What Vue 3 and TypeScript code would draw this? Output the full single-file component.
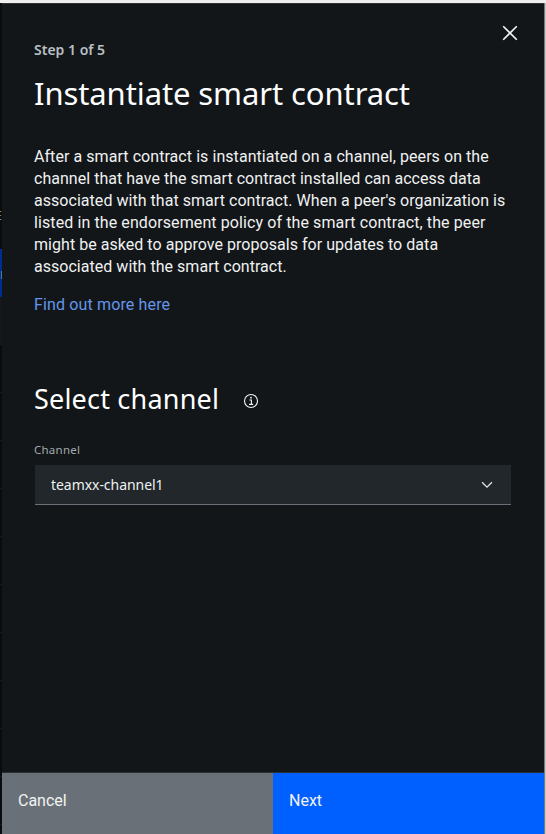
<script setup lang="ts">
import { ref } from 'vue'

interface Line {
  text: string
  spacing: string
}

const channel = ref<string>('teamxx-channel1')

const description: Line[] = [
  { text: 'After a smart contract is instantiated on a channel, peers on the', spacing: '0.06px' },
  { text: 'channel that have the smart contract installed can access data', spacing: '0.03px' },
  { text: "associated with that smart contract. When a peer's organization is", spacing: '0.04px' },
  { text: 'listed in the endorsement policy of the smart contract, the peer', spacing: '0.1px' },
  { text: 'might be asked to approve proposals for updates to data', spacing: '0.04px' },
  { text: 'associated with the smart contract.', spacing: '0.03px' },
]
</script>

<template>
  <div class="screen">
    <div class="topbar"></div>
    <div class="middle">
      <aside class="backdrop">
        <div class="row head">E</div>
        <div class="row active">r</div>
        <div class="row tint"></div>
        <div v-for="n in 11" :key="n" class="row line"></div>
      </aside>
      <section class="panel">
        <button class="close" type="button" aria-label="Close">
          <svg width="16" height="16" viewBox="0 0 16 16">
            <path d="M1.2 1.2 14.8 14.8M14.8 1.2 1.2 14.8" fill="none" stroke="#f3f3f3" stroke-width="1.6" />
          </svg>
        </button>
        <div class="content">
          <p class="step">Step 1 of 5</p>
          <h1 class="title">Instantiate smart contract</h1>
          <p class="description">
            <span v-for="line in description" :key="line.text" :style="{ letterSpacing: line.spacing }">{{ line.text }}</span>
          </p>
          <a class="link">Find out more here</a>
          <div class="subhead">
            <h2>Select channel</h2>
            <svg width="16" height="16" viewBox="0 0 16 16">
              <circle cx="8" cy="8" r="6.5" fill="none" stroke="#f3f3f3" stroke-width="1.1" />
              <path d="M6.4 7H8.4V11.2M6 11.4H10.1" fill="none" stroke="#f3f3f3" stroke-width="1.1" />
              <circle cx="8" cy="4.7" r="0.9" fill="#f3f3f3" />
            </svg>
          </div>
          <label class="label">Channel</label>
          <div class="select">
            <span>{{ channel }}</span>
            <svg width="12" height="8" viewBox="0 0 12 8">
              <path d="M1.1 1.3 6 6.2 10.9 1.3" fill="none" stroke="#e4e6e7" stroke-width="1.3" />
            </svg>
          </div>
        </div>
        <footer class="actions">
          <button class="cancel" type="button">Cancel</button>
          <button class="next" type="button">Next</button>
        </footer>
      </section>
      <div class="edge"></div>
    </div>
  </div>
</template>

<style>
body {
  background: #121619;
}
</style>

<style scoped>
* {
  box-sizing: border-box;
  margin: 0;
}
.screen {
  display: flex;
  flex-direction: column;
  width: 546px;
  height: 834px;
  overflow: hidden;
  font-family: Roboto, 'Liberation Sans', sans-serif;
  font-size: 16px;
}
.topbar {
  height: 3px;
  background: #f0efee;
}
.middle {
  display: flex;
  flex: 1;
  min-height: 0;
}
.backdrop {
  width: 2px;
  overflow: hidden;
  padding-top: 198px;
  background: #090b0c;
}
.row {
  display: flex;
  align-items: center;
  height: 48px;
  font: 14px 'Noto Sans', sans-serif;
  color: #8a8d90;
}
.head {
  justify-content: flex-end;
  padding-bottom: 20px;
  font-size: 12px;
}
.active {
  background: #002d91;
}
.tint {
  background: #15181a;
}
.line {
  border-bottom: 1px solid #15181a;
}
.panel {
  position: relative;
  display: flex;
  flex-direction: column;
  width: 542px;
  background: #121619;
  border-top: 1px solid #303436;
}
.close {
  position: absolute;
  top: 21px;
  right: 26px;
  display: flex;
  padding: 0;
  border: 0;
  background: none;
}
.content {
  flex: 1;
  padding: 37px 33px 0 32px;
}
.step {
  font: 600 14px/18px 'Noto Sans', sans-serif;
  color: #b9bfc3;
}
.title {
  margin-top: 14px;
  font: 400 31px/40px 'Noto Sans', sans-serif;
  letter-spacing: -0.1px;
  white-space: nowrap;
  color: #fff;
}
.description {
  display: flex;
  flex-direction: column;
  margin-top: 33px;
  line-height: 22px;
  white-space: nowrap;
  color: #f0f1f1;
}
.link {
  display: block;
  margin-top: 16px;
  line-height: 22px;
  letter-spacing: 0.14px;
  color: #6496ea;
}
.subhead {
  display: flex;
  align-items: center;
  gap: 24px;
  margin-top: 65px;
}
.subhead h2 {
  width: 185px;
  font: 400 27px/36px 'Noto Sans', sans-serif;
  letter-spacing: 0.2px;
  white-space: nowrap;
  color: #fff;
}
.subhead svg {
  margin-top: 4px;
}
.label {
  display: block;
  margin-top: 25px;
  font: 11.5px/16px 'Noto Sans', sans-serif;
  letter-spacing: 0.25px;
  color: #a2a9af;
}
.select {
  display: flex;
  align-items: center;
  justify-content: space-between;
  height: 40px;
  margin: 7px 0 0 1px;
  padding: 0 18px 0 16px;
  border-bottom: 1px solid #697077;
  background: #21272a;
  font: 14px/20px 'Noto Sans', sans-serif;
  letter-spacing: -0.05px;
  color: #eef0f1;
}
.actions {
  display: flex;
  height: 62px;
  border-top: 1px solid #292f34;
}
.actions button {
  flex: 1;
  padding: 17px 16px;
  border: 0;
  font: 16px/22px Roboto, sans-serif;
  text-align: left;
  display: flex;
  color: #f3f3f3;
}
.actions .cancel {
  background: #697077;
}
.actions .next {
  background: #005fff;
}
.edge {
  width: 2px;
  border-left: 1px solid #77797b;
  background: #c9c8c8;
}
</style>
